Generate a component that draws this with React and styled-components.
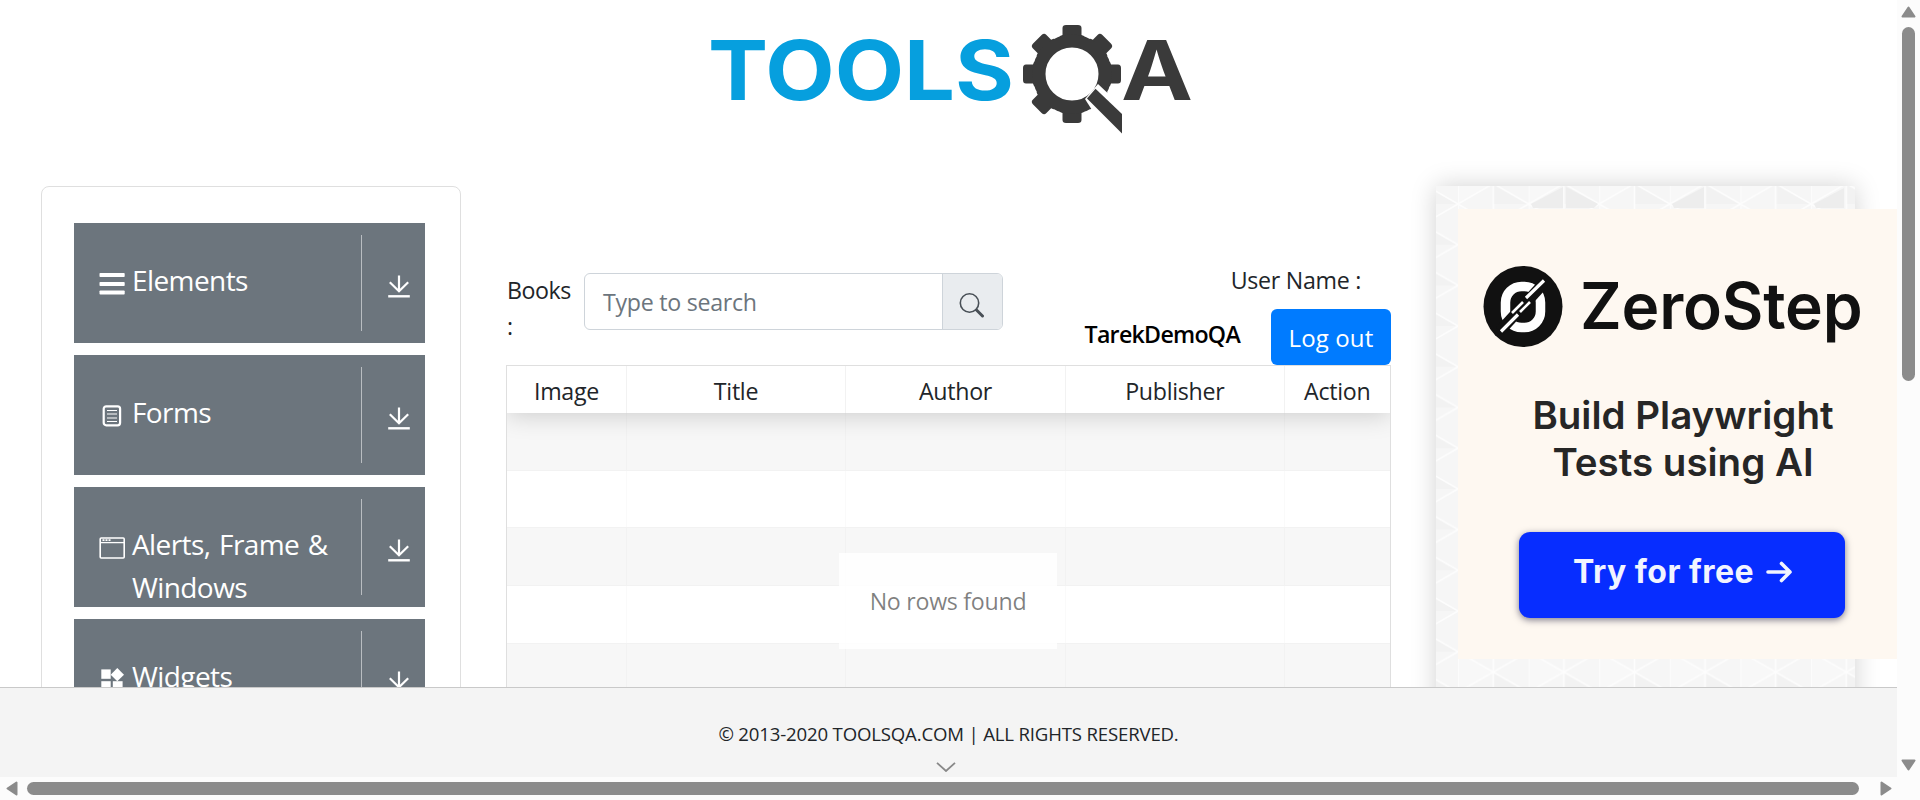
import React from "react";
import styled, { createGlobalStyle } from "styled-components";

const GlobalStyle = createGlobalStyle`
  * { box-sizing: border-box; }
  html, body { margin: 0; padding: 0; background: #fff; }
  body {
    font-family: "Open Sans", "Noto Sans", sans-serif;
    font-size: 23.2px;
    line-height: 36px;
    letter-spacing: -0.012em;
    color: #212529;
    overflow: hidden;
  }
`;

const Window = styled.div`
  display: grid;
  grid-template-columns: 1897px 23px;
  grid-template-rows: 777px 23px;
  width: 1920px;
  height: 800px;
  overflow: hidden;
`;

const Page = styled.div`
  display: flex;
  flex-direction: column;
  min-width: 0;
  overflow: hidden;
`;

const Header = styled.header`
  flex: 0 0 186px;
  padding: 10px 0 0 690px;
`;

const Body = styled.main`
  flex: 0 0 501px;
  display: flex;
  align-items: flex-start;
  padding-left: 41px;
  overflow: visible;
  min-height: 0;
`;

const Sidebar = styled.aside`
  flex: 0 0 420px;
  height: 700px;
  padding: 36px 35px 0 32px;
  border: 1px solid #dfdfdf;
  border-radius: 8px;
  display: flex;
  flex-direction: column;
  gap: 12px;
`;

const MenuItem = styled.div`
  flex: 0 0 120px;
  display: flex;
  align-items: flex-start;
  background: #6c757d;
  color: #fff;
  overflow: hidden;
`;

const MenuIcon = styled.svg`
  flex: 0 0 26px;
  height: 26px;
  margin: 49px 7px 0 25px;
`;

const MenuLabel = styled.span`
  flex: 1;
  padding-top: 36px;
  font-size: 28px;
  line-height: 43px;
  letter-spacing: -0.021em;
  word-spacing: 0.07em;
`;

const MenuToggle = styled.span`
  flex: 0 0 64px;
  height: 96px;
  margin-top: 12px;
  padding: 40px 0 0 25px;
  border-left: 1px solid #b9bdc1;
`;

const Content = styled.section`
  flex: 0 0 885px;
  margin-left: 45px;
  height: 700px;
`;

const Toolbar = styled.div`
  display: flex;
  height: 179px;
`;

const BooksLabel = styled.label`
  width: 78px;
  padding: 86px 0 0 1px;
  letter-spacing: -0.02em;
`;

const SearchGroup = styled.div`
  display: flex;
  width: 419px;
  height: 57px;
  margin-top: 87px;
  border: 1px solid #ced4da;
  border-radius: 6px;
  overflow: hidden;
`;

const SearchField = styled.div`
  flex: 1;
  padding: 10px 18px;
  color: #6c757d;
`;

const SearchButton = styled.div`
  width: 60px;
  padding: 18px 0 0 16px;
  border-left: 1px solid #ced4da;
  background: #e9ecef;
`;

const UserArea = styled.div`
  flex: 1;
  display: flex;
  flex-direction: column;
  align-items: flex-end;
  padding-top: 76px;
`;

const UserCaption = styled.div`
  height: 47px;
  padding-right: 30px;
`;

const UserLine = styled.div`
  display: flex;
  gap: 31px;
`;

const UserName = styled.strong`
  padding-top: 7px;
  font-weight: 600;
  color: #000;
  letter-spacing: -0.031em;
`;

const LogoutButton = styled.button`
  width: 120px;
  height: 56px;
  padding: 1px 0 0;
  border: 0;
  border-radius: 6px;
  background: #007bff;
  color: #fff;
  font: inherit;
  font-size: 24px;
  letter-spacing: 0.005em;
`;

const Table = styled.div`
  position: relative;
  border: 1px solid #dfdfdf;
  height: 600px;
`;

const columns = "120px 219px 220px 218.6px 1fr";

const HeadRow = styled.div`
  position: relative;
  display: grid;
  grid-template-columns: ${columns};
  height: 47px;
  box-shadow: 0 3px 24px rgba(0, 0, 0, 0.17);
  clip-path: inset(0 0 -40px 0);
  z-index: 1;
`;

const HeadCell = styled.div`
  padding-top: 7px;
  text-align: center;
  border-right: 1px solid rgba(0, 0, 0, 0.05);
  &:last-child { border-right: 0; }
`;

const BodyRow = styled.div`
  display: grid;
  grid-template-columns: ${columns};
  height: 57.7px;
  background: ${(p) => (p.$odd ? "#f7f7f7" : "#fff")};
  border-bottom: 1px solid #f2f2f2;
`;

const BodyCell = styled.div`
  border-right: 1px solid rgba(0, 0, 0, 0.02);
  &:last-child { border-right: 0; }
`;

const EmptyNotice = styled.div`
  position: absolute;
  left: 332px;
  top: 187px;
  width: 218px;
  height: 96px;
  padding-top: 30px;
  text-align: center;
  background: rgba(255, 255, 255, 0.8);
  color: rgba(0, 0, 0, 0.5);
  z-index: 2;
`;

const AdPanel = styled.aside`
  position: relative;
  flex: 0 0 419px;
  height: 700px;
  margin-left: 45px;
  box-shadow: 0 0 24px rgba(0, 0, 0, 0.18);
  background: #f5f5f5;
`;

const AdPattern = styled.svg`
  position: absolute;
  inset: 0;
`;

const Banner = styled.div`
  position: absolute;
  left: 22px;
  top: 23px;
  width: 450px;
  height: 450px;
  background: #fef8f1;
  color: #111;
  font-family: Inter, sans-serif;
`;

const BannerBrand = styled.div`
  display: flex;
  align-items: flex-start;
  height: 165px;
  padding: 57px 0 0 25px;
`;

const BrandName = styled.span`
  margin-left: 17px;
  font-size: 64px;
  line-height: 80px;
  font-weight: 600;
  letter-spacing: -0.003em;
  white-space: nowrap;
`;

const BannerText = styled.p`
  width: 450px;
  margin: 18px 0 0;
  font-size: 38.5px;
  line-height: 46.5px;
  font-weight: 600;
  letter-spacing: 0;
  text-align: center;
  color: #262626;
`;

const BannerButton = styled.div`
  display: flex;
  align-items: center;
  gap: 12px;
  width: 326px;
  height: 86px;
  margin: 47px 0 0 61px;
  padding: 0 0 6px 54px;
  border-radius: 11px;
  background: #072dff;
  box-shadow: 0 2px 7px rgba(0, 0, 40, 0.5);
  color: #f1f4ff;
  font-size: 32px;
  font-weight: 700;
  letter-spacing: 0.015em;
  white-space: nowrap;
`;

const Footer = styled.footer`
  position: relative;
  z-index: 5;
  flex: 0 0 90px;
  display: flex;
  flex-direction: column;
  align-items: center;
  padding-top: 28px;
  border-top: 1px solid #c9c9c9;
  background: #f4f4f4;
  font-size: 18.6px;
  letter-spacing: -0.009em;
`;

const Chevron = styled.svg`
  margin: 10px 5px 0 0;
`;

const ScrollColumn = styled.div`
  display: flex;
  flex-direction: column;
  align-items: center;
  padding: 6px 1px 0 0;
  background: #fcfcfc;
`;

const ScrollRow = styled.div`
  display: flex;
  align-items: center;
  padding: 0 6px 0 6px;
  background: #fcfcfc;
`;

const Thumb = styled.div`
  flex: none;
  background: #8b8b8b;
  border-radius: 7px;
  width: ${(p) => p.$w}px;
  height: ${(p) => p.$h}px;
  margin: ${(p) => p.$m};
`;

const ArrowIcon = styled.svg`
  flex: none;
`;

const Corner = styled.div`
  background: #fcfcfc;
`;

function Logo() {
  return (
    <svg width="520" height="140" viewBox="0 0 520 140" role="img" aria-label="ToolsQA">
      <g fontFamily="Inter, sans-serif" fontWeight="700" fontSize="82.5" letterSpacing="0">
        <text x="18" y="90" fill="#069fde" textLength="306" lengthAdjust="spacingAndGlyphs">TOOLS</text>
        <text x="431" y="90" fill="#3a3a3a" textLength="72" lengthAdjust="spacingAndGlyphs">A</text>
      </g>
      <g transform="translate(382 64)" fill="#3a3a3a">
        {[0, 45, 90, 135, 180, 225, 270, 315].map((a) => (
          <path key={a} transform={`rotate(${a})`} d="M-14 -34 L-12 -38 L-9.5 -39 L-9.5 -46 Q-9.5 -49 -6 -49 H6 Q9.5 -49 9.5 -46 L9.5 -39 L12 -38 L14 -34Z" />
        ))}
        <circle r="33" fill="none" stroke="#3a3a3a" strokeWidth="13" />
        <path d="M13 25 L26 10 L42 25 L50 50 L25 44Z" fill="#fff" />
        <path d="M23.5 14.7 L50 40 V59.5 L15 24.5Z" />
      </g>
    </svg>
  );
}

const icons = {
  menu: (
    <g fill="#fff">
      <rect x=".5" y="1" width="25.2" height="4" rx=".8" />
      <rect x=".5" y="10" width="25.2" height="4" rx=".8" />
      <rect x=".5" y="18.500" width="25.2" height="4" rx=".8" />
    </g>
  ),
  form: (
    <g fill="none" stroke="#fff">
      <rect x="4.7" y="2.3" width="16.4" height="19" rx="2.5" strokeWidth="2.2" />
      <path d="M8 6.5h10M8 10h10M8 14h10M8 17.500h10" strokeWidth="1.2" />
    </g>
  ),
  window: (
    <g fill="none" stroke="#fff">
      <rect x="1.2" y="2" width="24" height="20" rx="1" strokeWidth="1.6" />
      <path d="M1.2 6.6h24" strokeWidth="1.3" />
      <path d="M3.5 4.2h9" strokeWidth="1.8" strokeDasharray="2 1" />
    </g>
  ),
  widgets: (
    <g fill="#fff">
      <rect x="2.3" y="1.4" width="9.4" height="9.4" />
      <rect x="2.3" y="13.2" width="9.4" height="9.4" />
      <rect x="13.8" y="13.2" width="9.8" height="9.4" />
      <path d="M18.3 .1 25 6.7 18.3 13.3 11.7 6.7Z" />
    </g>
  ),
};

const menu = [
  ["menu", "Elements"],
  ["form", "Forms"],
  ["window", "Alerts, Frame & Windows"],
  ["widgets", "Widgets"],
];

const heads = ["Image", "Title", "Author", "Publisher", "Action"];

function DownloadIcon() {
  return (
    <svg width="24" height="24" viewBox="0 0 24 24" display="block" fill="none" stroke="#fff">
      <path d="M12 .5V16M2.8 7.2 12 16.2 21.2 7.2" strokeWidth="2.2" />
      <path d="M1.2 21.3H22.8" strokeWidth="2.4" />
    </svg>
  );
}

function BrandMark() {
  return (
    <svg width="80" height="82" viewBox="0 0 80 82">
      <ellipse cx="40" cy="40.5" rx="39.5" ry="40.5" fill="#111" />
      <rect x="22.5" y="20.5" width="35" height="41" rx="16" fill="none" stroke="#fff" strokeWidth="9.5" />
      <path d="M17 65 61 17" stroke="#111" strokeWidth="11" />
      <path d="M18 65.5 35 48.5M43 32 61 14.5" stroke="#fff" strokeWidth="3.2" />
      <path d="M29 47 40 36M37 46 47 36" stroke="#fff" strokeWidth="2.6" />
    </svg>
  );
}

function Triangles() {
  return (
    <AdPattern width="419" height="700">
      <defs>
        <pattern id="tri" x="22" y="18" width="70.6" height="40.7" patternUnits="userSpaceOnUse">
          <rect width="70.6" height="40.7" fill="#f6f6f6" />
          <path d="M70.6 40.7 35.3 20.35V61.05Z" fill="#f2f2f2" />
          <path d="M0 0V40.7L35.3 20.35Z" fill="#f8f8f8" />
          <path d="M0 0V40.7M35.3 0V40.7M0 0 70.6 40.7M70.6 0 0 40.7" stroke="#fdfdfd" strokeWidth="1.6" fill="none" />
        </pattern>
      </defs>
      <rect width="419" height="700" fill="url(#tri)" />
      <g fill="#ededed">
        <path d="M95 18 127 1V22H97ZM130 1 162 18 158 22H130ZM236 18 268 1V22H238ZM378 18 408 2V22H380Z" />
      </g>
    </AdPattern>
  );
}

function Arrow({ d, w, h }) {
  return (
    <ArrowIcon width={w} height={h} viewBox={`0 0 ${w} ${h}`}>
      <path d={d} fill="#8b8b8b" stroke="#8b8b8b" strokeWidth="2" strokeLinejoin="round" />
    </ArrowIcon>
  );
}

export default function App() {
  return (
    <>
      <GlobalStyle />
      <Window>
        <Page>
          <Header><Logo /></Header>
          <Body>
            <Sidebar>
              {menu.map(([icon, label]) => (
                <MenuItem key={label}>
                  <MenuIcon viewBox="0 0 26 26">{icons[icon]}</MenuIcon>
                  <MenuLabel>{label}</MenuLabel>
                  <MenuToggle><DownloadIcon /></MenuToggle>
                </MenuItem>
              ))}
            </Sidebar>
            <Content>
              <Toolbar>
                <BooksLabel>Books<br />:</BooksLabel>
                <SearchGroup>
                  <SearchField>Type to search</SearchField>
                  <SearchButton>
                    <svg width="26" height="26" viewBox="0 0 26 26" fill="none" stroke="#495057" display="block">
                      <circle cx="10.5" cy="11" r="9.2" strokeWidth="1.6" />
                      <path d="M17.5 18 23.5 24" strokeWidth="3" strokeLinecap="round" />
                    </svg>
                  </SearchButton>
                </SearchGroup>
                <UserArea>
                  <UserCaption>User Name :</UserCaption>
                  <UserLine>
                    <UserName>TarekDemoQA</UserName>
                    <LogoutButton>Log out</LogoutButton>
                  </UserLine>
                </UserArea>
              </Toolbar>
              <Table>
                <HeadRow>
                  {heads.map((h) => <HeadCell key={h}>{h}</HeadCell>)}
                </HeadRow>
                {[0, 1, 2, 3, 4].map((r) => (
                  <BodyRow key={r} $odd={r % 2 === 0}>
                    {heads.map((h) => <BodyCell key={h} />)}
                  </BodyRow>
                ))}
                <EmptyNotice>No rows found</EmptyNotice>
              </Table>
            </Content>
            <AdPanel>
              <Triangles />
              <Banner>
                <BannerBrand>
                  <BrandMark />
                  <BrandName>ZeroStep</BrandName>
                </BannerBrand>
                <BannerText>Build Playwright<br />Tests using AI</BannerText>
                <BannerButton>
                  Try for free
                  <svg width="27" height="24" viewBox="0 0 27 24" fill="none" stroke="#f1f4ff" strokeWidth="3.6" strokeLinecap="round" strokeLinejoin="round">
                    <path d="M2 12H24M15.5 3.5 24 12 15.5 20.5" />
                  </svg>
                </BannerButton>
              </Banner>
            </AdPanel>
          </Body>
          <Footer>
            <span>© 2013-2020 TOOLSQA.COM | ALL RIGHTS RESERVED.</span>
            <Chevron width="20" height="10" viewBox="0 0 20 10" fill="none" stroke="#888" strokeWidth="1.8">
              <path d="M1 .8 10 9 19 .8" />
            </Chevron>
          </Footer>
        </Page>
        <ScrollColumn>
          <Arrow w={15} h={12} d="M7.5 1.5 13.5 10.5H1.5Z" />
          <Thumb $w={13} $h={354} $m="9px 0 378px" />
          <Arrow w={15} h={12} d="M7.5 10.5 13.5 1.5H1.5Z" />
        </ScrollColumn>
        <ScrollRow>
          <Arrow w={12} h={15} d="M1.5 7.5 10.5 1.5V13.5Z" />
          <Thumb $w={1832} $h={13} $m="0 21px 0 9px" />
          <Arrow w={12} h={15} d="M10.5 7.5 1.5 1.5V13.5Z" />
        </ScrollRow>
        <Corner />
      </Window>
    </>
  );
}
